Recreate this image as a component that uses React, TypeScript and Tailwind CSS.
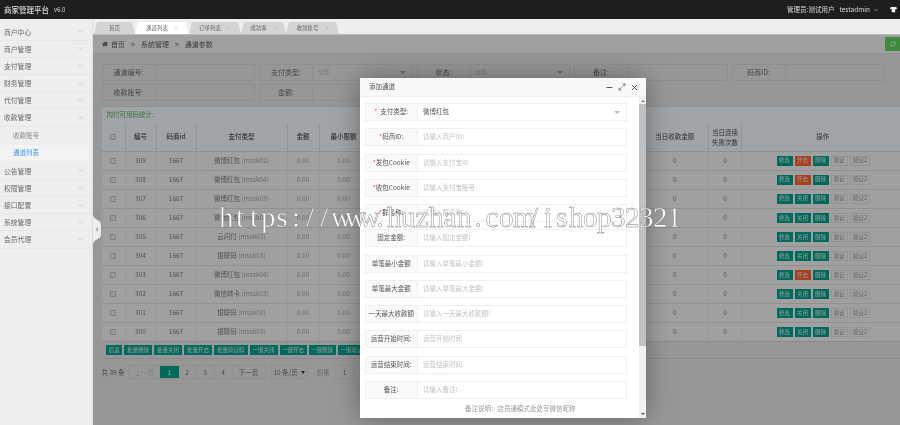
import React from "react";
import { ChevronDown, ChevronUp, Minus, X, Maximize2, RefreshCw } from "lucide-react";
import { FaTshirt, FaHome } from "react-icons/fa";

const font = { fontFamily: '"Noto Sans CJK SC","Open Sans",sans-serif' };

const menuTop = ["商户中心", "商户管理", "支付管理", "财务管理", "代付管理"];
const menuBottom = ["公告管理", "权限管理", "接口配置", "系统管理", "会员代理"];

function MenuRow({ label, open }: { label: string; open?: boolean }) {
  return (
    <div className="flex h-[17.2px] shrink-0 items-center justify-between border-b border-[#e6e6e6] pl-[4px] pr-[8px] text-[6.8px] text-[#666]">
      <span>{label}</span>
      {open ? <ChevronUp size={7} className="text-[#bbb]" /> : <ChevronDown size={7} className="text-[#bbb]" />}
    </div>
  );
}

const tabs = [
  { t: "首页", w: "w-[41px]" },
  { t: "通道列表", w: "w-[54px]", active: true, x: true },
  { t: "订单列表", w: "w-[52px]", x: true },
  { t: "成功率", w: "w-[45px]", x: true },
  { t: "收款账号", w: "w-[53px]", x: true },
];

function Field({ label, value, select }: { label: string; value?: string; select?: boolean }) {
  return (
    <div className="flex h-[17.5px] w-[153.5px] shrink-0 rounded-[1px] border border-[#cccccc] text-[7px] text-[#666]">
      <div className="flex w-[53px] shrink-0 items-center justify-center border-r border-[#cccccc]">{label}</div>
      <div className="flex flex-1 items-center justify-between pl-[5px] pr-[6px] text-[5.5px] text-[#aaa]">
        <span>{value}</span>
        {select && <span className="h-0 w-0 border-x-[3px] border-t-[3px] border-x-transparent border-t-[#999]" />}
      </div>
    </div>
  );
}

const rows = [
  ["309", "微博红包", "mssk02", "0.00", true],
  ["308", "微博红包", "mssk04", "0.00", true],
  ["307", "微博红包", "mssk03", "0.00", false],
  ["306", "微博红包", "mssk01", "0.00", false],
  ["305", "云闪付", "mssk03", "0.00", false],
  ["304", "银联码", "mssk03", "0.10", false],
  ["303", "微博红包", "mssk04", "0.00", true],
  ["302", "微信转卡", "mssk03", "0.00", false],
  ["301", "银联码", "mssk02", "0.00", false],
  ["300", "银联码", "mssk03", "0.00", false],
] as const;

function Teal({ children, w }: { children: React.ReactNode; w: string }) {
  return (
    <span className={`flex h-[10px] shrink-0 items-center justify-center bg-[#009a86] text-[5.5px] text-[#ddd] ${w}`}>
      {children}
    </span>
  );
}

function Ghost({ children, w }: { children: React.ReactNode; w: string }) {
  return (
    <span className={`flex h-[10px] shrink-0 items-center justify-center border border-[#d4d4d4] text-[5.5px] text-[#888] ${w}`}>
      {children}
    </span>
  );
}

const batch = [
  ["后退", "w-[16px]"],
  ["批量删除", "w-[28px]"],
  ["批量关闭", "w-[28px]"],
  ["批量开启", "w-[28px]"],
  ["批量验证码", "w-[33.5px]"],
  ["一键关闭", "w-[28px]"],
  ["一键开启", "w-[27px]"],
  ["一键删除", "w-[27px]"],
  ["一键验证", "w-[28px]"],
];

const th = "border-r border-[#d0d6dc] text-center font-medium";
const td = "border-r border-[#dbdbdb] text-center";

function Table() {
  return (
    <table className="w-[802px] table-fixed border-collapse text-[6.5px] text-[#777]">
      <colgroup>
        <col className="w-[23.5px]" />
        <col className="w-[31px]" />
        <col className="w-[40px]" />
        <col className="w-[91px]" />
        <col className="w-[32px]" />
        <col className="w-[49px]" />
        <col className="w-[273px]" />
        <col className="w-[67.5px]" />
        <col className="w-[33px]" />
        <col />
      </colgroup>
      <thead>
        <tr className="h-[28px] bg-[#e6ebf0] text-[#444]">
          <th className={th}><span className="mx-auto block h-[6px] w-[6px] rounded-[1px] border border-[#b5b5b5] bg-[#dedede]" /></th>
          <th className={th}>编号</th>
          <th className={th}>码商id</th>
          <th className={th}>支付类型</th>
          <th className={th}>金额</th>
          <th className={th}>最小限额</th>
          <th className={th}></th>
          <th className={`${th} font-normal`}>当日收款金额</th>
          <th className={`${th} font-normal leading-[10px]`}>当日连续<br />失败次数</th>
          <th className="text-center font-normal">操作</th>
        </tr>
      </thead>
      <tbody>
        {rows.map((r) => (
          <tr key={r[0]} className="h-[19.05px] border-t border-[#d0d0d0] bg-[#e6e6e6]">
            <td className={td}><span className="mx-auto block h-[6px] w-[6px] rounded-[1px] border border-[#b5b5b5] bg-[#dedede]" /></td>
            <td className={td}>{r[0]}</td>
            <td className={td}>1667</td>
            <td className={td}>{r[1]} <span className="text-[#999]">({r[2]})</span></td>
            <td className={`${td} text-[#999]`}>{r[3]}</td>
            <td className={`${td} text-[#999]`}>0.00</td>
            <td className={td}></td>
            <td className={td}>0</td>
            <td className={td}>0</td>
            <td>
              <div className="flex items-center gap-[2px] pl-[34.5px]">
                <Teal w="w-[16px]">修改</Teal>
                {r[4] ? (
                  <span className="flex h-[10px] w-[16px] items-center justify-center bg-[#f25c2a] text-[5.5px] text-[#ddd]">开启</span>
                ) : (
                  <Teal w="w-[16px]">关闭</Teal>
                )}
                <Teal w="w-[16px]">删除</Teal>
                <Ghost w="w-[17.5px]">验证</Ghost>
                <Ghost w="w-[20px]">验证2</Ghost>
              </div>
            </td>
          </tr>
        ))}
      </tbody>
    </table>
  );
}

const pageCell = "flex h-full items-center justify-center border-r border-[#cfcfcf]";

function Pagination() {
  return (
    <div className="ml-[8.5px] mt-[6px] flex h-[14px] items-center text-[6.5px] text-[#666]">
      <span className="w-[26.5px] shrink-0">共 39 条</span>
      <div className="flex h-full shrink-0 border border-[#cfcfcf]">
        <span className={`${pageCell} w-[31px] text-[#b5b5b5]`}>上一页</span>
        <span className="flex h-full w-[18.5px] items-center justify-center bg-[#009a86] text-[#eee]">1</span>
        <span className={`${pageCell} w-[18px]`}>2</span>
        <span className={`${pageCell} w-[18px]`}>3</span>
        <span className={`${pageCell} w-[18px]`}>4</span>
        <span className="flex h-full w-[32px] items-center justify-center">下一页</span>
      </div>
      <span className="ml-[5px] flex h-full w-[37px] shrink-0 items-center justify-center gap-[3px] border border-[#cfcfcf]">
        10 条/页 <span className="h-0 w-0 border-x-[2px] border-t-[3px] border-x-transparent border-t-[#333]" />
      </span>
      <span className="ml-[9px] text-[#999]">到第</span>
      <span className="ml-[5px] flex h-full w-[20px] shrink-0 items-center justify-center border border-[#cfcfcf]">1</span>
      <span className="ml-[5px]">页</span>
    </div>
  );
}

const form: [string, string, string?][] = [
  ["支付类型:", "微博红包", "select"],
  ["码商ID:", "请输入商户ID!", "req"],
  ["发包Cookie", "请输入支付宝ID", "req"],
  ["收包Cookie", "请输入支付宝账号", "req"],
  ["群名称:", "请输入群名称", "req"],
  ["固定金额:", "请输入固定金额!"],
  ["单笔最小金额", "请输入单笔最小金额!"],
  ["单笔最大金额", "请输入单笔最大金额!"],
  ["一天最大收款额", "请输入一天最大收款额!"],
  ["运营开始时间:", "运营开始时间"],
  ["运营结束时间:", "运营结束时间"],
  ["备注:", "请输入备注!"],
];

function Modal() {
  return (
    <div className="absolute left-[267px] top-[43px] flex h-[340px] w-[286px] flex-col bg-white shadow-[0_0_24px_rgba(0,0,0,0.35)]">
      <div className="flex h-[19px] shrink-0 items-center justify-between border-b border-[#f0f0f0] bg-[#f8f8f8] pl-[9px] pr-[7px] text-[6.5px] text-[#555]">
        <span>添加通道</span>
        <div className="flex items-center gap-[4px] text-[#555]">
          <Minus size={9} strokeWidth={2.5} />
          <Maximize2 size={8} />
          <X size={9} strokeWidth={2.5} />
        </div>
      </div>
      <div className="flex min-h-0 flex-1">
        <div className="flex-1 pl-[5px] pr-[12px] pt-[6px]">
          {form.map(([label, ph, kind]) => (
            <div key={label} className="mb-[7.25px] flex h-[18px] rounded-[1px] border border-[#f0f0f0] text-[6.5px]">
              <div className="flex w-[51.5px] shrink-0 items-center justify-center whitespace-nowrap border-r border-[#f0f0f0] bg-[#fafafa] text-[#555]">
                {kind && <span className={`text-[#f44] ${kind === "select" ? "mr-[3px]" : ""}`}>*</span>}
                {label}
              </div>
              {kind === "select" ? (
                <div className="flex flex-1 items-center justify-between pl-[5.5px] pr-[6px] text-[#555]">
                  <span>{ph}</span>
                  <span className="h-0 w-0 border-x-[3px] border-t-[3px] border-x-transparent border-t-[#bbb]" />
                </div>
              ) : (
                <input
                  readOnly
                  placeholder={ph}
                  style={font}
                  className="min-w-0 flex-1 bg-white pl-[5.5px] text-[6.5px] outline-none placeholder:text-[#c4c4c4]"
                />
              )}
            </div>
          ))}
          <div className="-mt-[2px] pl-[100px] text-[6.5px] text-[#999]">备注说明：店员通模式此处写微信昵称</div>
        </div>
        <div className="flex w-[7px] shrink-0 flex-col items-center bg-[#f1f1f1]">
          <span className="mt-[3px] h-0 w-0 border-x-[2px] border-b-[2px] border-x-transparent border-b-[#777]" />
          <div className="mt-[2px] h-[242px] w-full bg-[#c1c1c1]" />
          <span className="mb-[3px] mt-auto h-0 w-0 border-x-[2px] border-t-[2px] border-x-transparent border-t-[#555]" />
        </div>
      </div>
    </div>
  );
}

const mark = "https://www.huzhan.com/ishop32321".split("");

export default function App() {
  return (
    <div style={font} className="relative flex h-[425px] w-[900px] flex-col overflow-hidden bg-[#eee] blur-[0.5px]">
      <header className="flex h-[19px] shrink-0 items-center justify-between bg-[#1e1e1e] pl-[4px] pr-[3px] text-[#ddd]">
        <div className="flex items-center gap-[5px]">
          <span className="text-[7.5px] font-medium">商家管理平台</span>
          <span className="text-[6px]">v6.0</span>
        </div>
        <div className="flex items-center text-[6.5px]">
          <span>管理员:测试用户</span>
          <span className="ml-[5px]">testadmin</span>
          <ChevronDown size={6} className="ml-[3px]" />
          <FaTshirt size={7} className="ml-[11px] text-white" />
        </div>
      </header>
      <div className="flex min-h-0 flex-1">
        <aside className="flex w-[93px] shrink-0 flex-col border-r border-[#ddd] bg-[#eee] pt-[4.5px]">
          {menuTop.map((m) => <MenuRow key={m} label={m} />)}
          <MenuRow label="收款管理" open />
          <div className="flex h-[18px] shrink-0 items-center pl-[13px] text-[6.5px] text-[#888]">收款账号</div>
          <div className="flex h-[18px] shrink-0 items-center pb-[1px]">
            <div className="flex h-[16px] w-[88px] items-center bg-[#f3f3f3] pl-[13px] text-[6.5px] text-[#3a9cf5]">通道列表</div>
          </div>
          {menuBottom.map((m) => <MenuRow key={m} label={m} />)}
        </aside>
        <main className="relative flex min-w-0 flex-1 flex-col">
          <nav className="flex h-[16px] shrink-0 items-end border-b border-[#bbb] bg-[#eee] pl-[1px]">
            {tabs.map((t) => (
              <div
                key={t.t}
                className={`flex h-[12px] shrink-0 items-center justify-center gap-[6px] text-[5.5px] text-[#666] [clip-path:polygon(3px_0,calc(100%-3px)_0,100%_100%,0_100%)] ${t.w} ${t.active ? "bg-white" : "bg-[#d4d4d4]"}`}
              >
                <span>{t.t}</span>
                {t.x && <X size={4} className="text-[#aaa]" />}
              </div>
            ))}
          </nav>
          <section className="relative min-h-0 flex-1 overflow-hidden bg-[#d9d9d9]">
            <div className="flex h-[19px] items-center justify-between border-b border-[#d0d0d0] bg-[#e6e6e6] pl-[9px] text-[7px] text-[#555]">
              <div className="flex items-center gap-[2px]">
                <FaHome size={6} />
                <span className="ml-[1px]">首页</span>
                <span className="mx-[4px]">&gt;</span>
                <span>系统管理</span>
                <span className="mx-[4px]">&gt;</span>
                <span>通道参数</span>
              </div>
              <div className="mt-[2px] flex h-[14px] w-[15px] items-center justify-center self-start rounded-l-[1px] bg-[#5cc65c] text-white">
                <RefreshCw size={6} />
              </div>
            </div>
            <div className="w-[830px] pl-[8.5px] pt-[9.5px]">
              <div className="flex gap-[4px]">
                <Field label="通道编号:" />
                <Field label="支付类型:" value="全部" select />
                <Field label="状态:" value="全部" select />
                <Field label="备注:" />
                <Field label="码商ID:" />
              </div>
              <div className="mt-[2.5px] flex gap-[4px]">
                <Field label="收款账号:" />
                <Field label="金额:" />
              </div>
            </div>
            <div className="ml-[8.5px] mt-[5px] w-[802px] border-t border-[#cad0d6]">
              <div className="flex h-[16px] items-center bg-[#e6ebf0] pl-[5px] text-[6.5px] text-[#5aa55a]">掏付可用码统计:</div>
              <Table />
              <div className="flex h-[18px] items-center gap-[2px] border-y border-[#c8c8c8] pl-[4.5px]">
                {batch.map(([t, w]) => <Teal key={t} w={w}>{t}</Teal>)}
              </div>
            </div>
            <Pagination />
            <div className="absolute inset-0 bg-black/30" />
            <Modal />
          </section>
          <svg viewBox="0 0 8 29" className="absolute left-0 top-[196px] h-[29px] w-[8px]">
            <path d="M0 0 C1 5 8 5 8 9 L8 20 C8 24 1 24 0 29 Z" fill="#eee" />
            <path d="M5 12 L2.5 14.5 L5 17 Z" fill="#aaa" />
          </svg>
        </main>
      </div>
      <div className="pointer-events-none absolute left-[219px] top-[201px] flex font-['Liberation_Serif',serif] text-[29px] leading-[32px] text-white [-webkit-text-stroke:0.4px_#777]">
        {mark.map((c, i) => (
          <span key={i} className="w-[14px] text-center">{c}</span>
        ))}
      </div>
    </div>
  );
}
